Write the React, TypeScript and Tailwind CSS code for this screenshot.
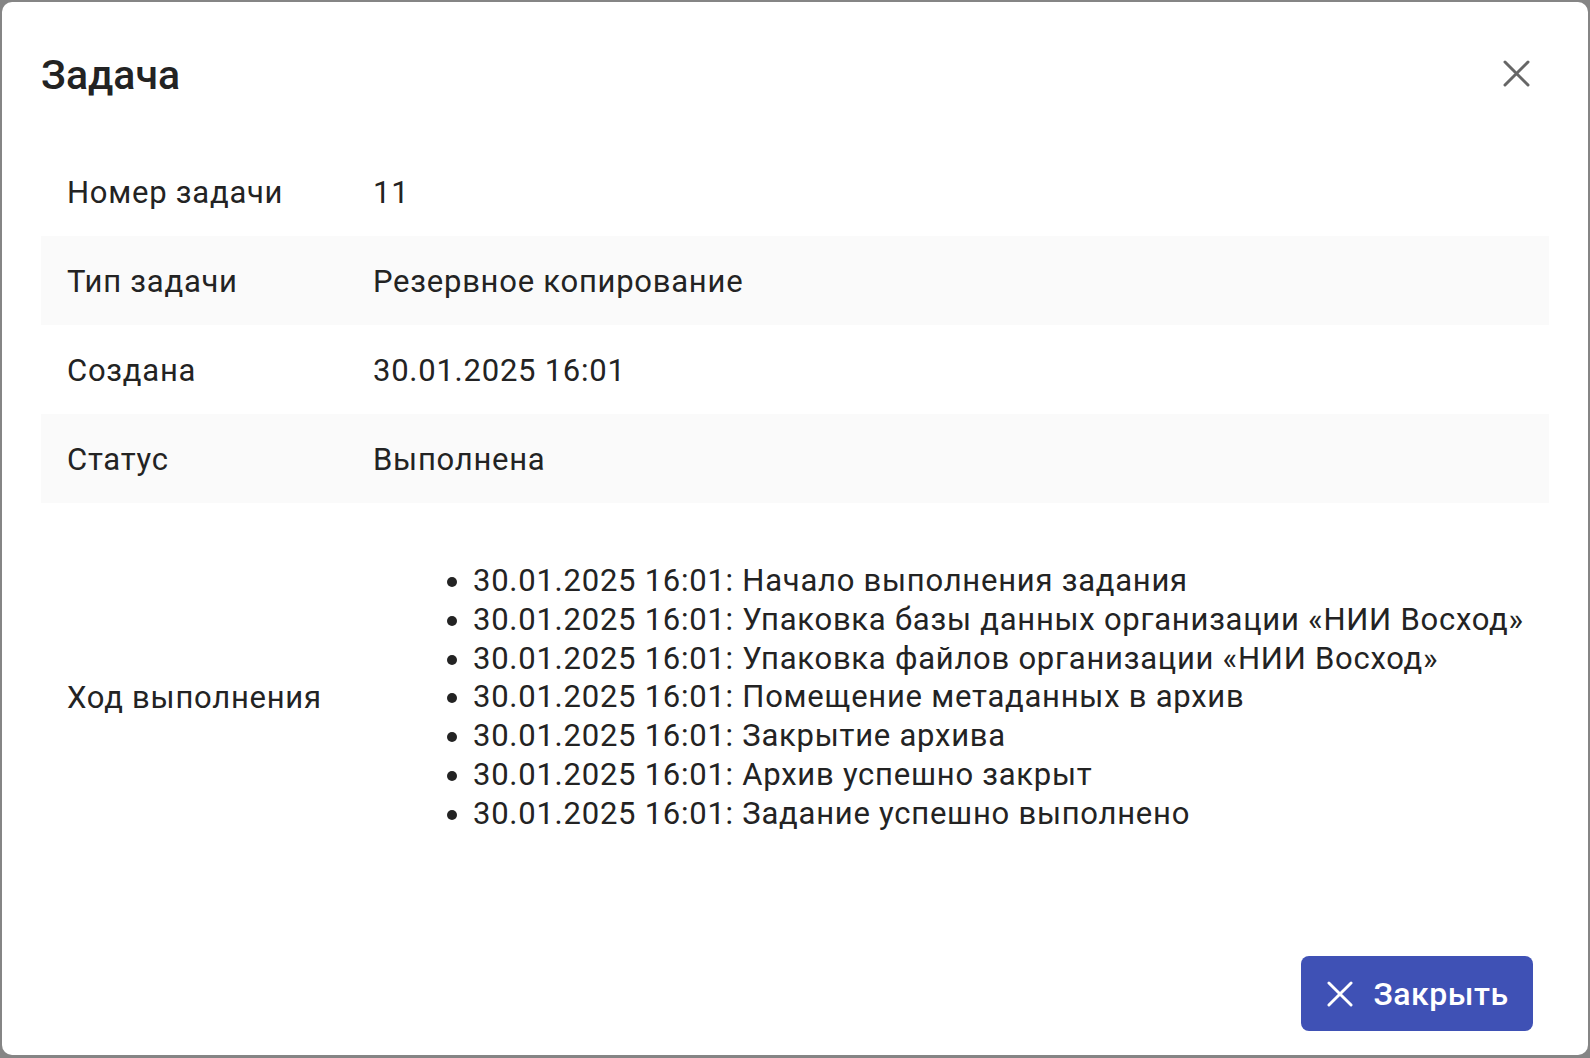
const rows: { label: string; value: string }[] = [
  { label: "Номер задачи", value: "11" },
  { label: "Тип задачи", value: "Резервное копирование" },
  { label: "Создана", value: "30.01.2025 16:01" },
  { label: "Статус", value: "Выполнена" },
];

const progress = [
  "Начало выполнения задания",
  "Упаковка базы данных организации «НИИ Восход»",
  "Упаковка файлов организации «НИИ Восход»",
  "Помещение метаданных в архив",
  "Закрытие архива",
  "Архив успешно закрыт",
  "Задание успешно выполнено",
];

function CloseIcon({ className }: { className?: string }) {
  return (
    <svg viewBox="0 0 27 27" className={className} fill="none" stroke="currentColor" strokeWidth="3" strokeLinecap="round">
      <path d="M2 2 L25 25 M25 2 L2 25" />
    </svg>
  );
}

export default function App() {
  return (
    <div className="w-[1590px] h-[1058px] bg-[#858585] pt-[2px] pl-[2px] pr-[2px] pb-[3px] font-['Roboto',sans-serif] text-[#232323]">
      <div className="bg-white rounded-[10px] h-full flex flex-col">
        {/* header */}
        <div className="flex items-center justify-between pt-[40px] pl-[39px] pr-[58px]">
          <h2 className="text-[41px] leading-[67px] font-medium">Задача</h2>
          <button className="text-[#666666] -mt-[5px]">
            <CloseIcon className="w-[27px] h-[27px]" />
          </button>
        </div>

        {/* details */}
        <div className="mt-[38px] px-[39px] text-[31px] tracking-[0.75px]">
          {rows.map((r, i) => (
            <div
              key={r.label}
              className={`grid grid-cols-[306px_1fr] h-[89px] pt-[3px] items-center ${i % 2 === 1 ? "bg-[#fafafa]" : ""}`}
            >
              <div className="pl-[26px]">{r.label}</div>
              <div className="pl-[26px]">{r.value}</div>
            </div>
          ))}
          <div className="grid grid-cols-[306px_1fr] items-center pt-[59px] pb-[57px]">
            <div className="pl-[26px]">Ход выполнения</div>
            <div className="pl-[26px]">
              <ul className="list-disc pl-[100px] leading-[38.8px]">
                {progress.map((p) => (
                  <li key={p}>30.01.2025 16:01: {p}</li>
                ))}
              </ul>
            </div>
          </div>
        </div>

        {/* footer */}
        <div className="flex-1 flex items-end justify-end pr-[55px] pb-[24px]">
          <button className="flex items-center justify-center gap-[20px] w-[232px] h-[75px] rounded-[8px] bg-[#3f51b5] text-white text-[32px] font-medium tracking-[0.5px] pl-[2px]">
            <CloseIcon className="w-[26px] h-[26px]" />
            <span>Закрыть</span>
          </button>
        </div>
      </div>
    </div>
  );
}
